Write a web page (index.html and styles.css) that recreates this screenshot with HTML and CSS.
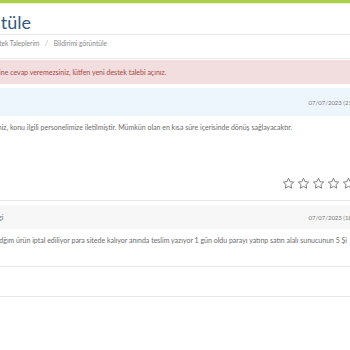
FILE: index.html
```html
<!DOCTYPE html>
<html lang="tr">
<head>
  <meta charset="UTF-8" />
  <meta name="viewport" content="width=device-width, initial-scale=1.0"/>
  <title>Bildirimi Görüntüle</title>
  <link rel="stylesheet" href="styles.css">
</head>
<body>
  <div class="topbar"></div>
  <div class="page">
    <h1 class="baslik">Bildirimi Görüntüle</h1>
    <div class="breadcrumb">
      <a href="#">Anasayfa</a> <span class="ayrac">/</span>
      <a href="#">Destek Taleplerim</a> <span class="ayrac">/</span>
      <span>Bildirimi görüntüle</span>
    </div>

    <div class="uyari">Kapatılmış destek talebine cevap veremezsiniz, lütfen yeni destek talebi açınız.</div>

    <div class="mesaj">
      <div class="mesaj-ust mavi">
        <span class="kim">Destek Ekibi</span>
        <span class="tarih">07/07/2023 (21:14)</span>
      </div>
      <div class="mesaj-govde">
        <p class="ilk">Talebiniz, konu ilgili personelimize iletilmiştir. Mümkün olan en kısa süre içerisinde dönüş sağlayacaktır.</p>
        <div class="puan">
          <svg viewBox="0 0 24 24"><path d="M12 2.5l2.9 6.1 6.6.8-4.9 4.6 1.3 6.6L12 17.3l-5.9 3.3 1.3-6.6-4.9-4.6 6.6-.8z"/></svg>
          <svg viewBox="0 0 24 24"><path d="M12 2.5l2.9 6.1 6.6.8-4.9 4.6 1.3 6.6L12 17.3l-5.9 3.3 1.3-6.6-4.9-4.6 6.6-.8z"/></svg>
          <svg viewBox="0 0 24 24"><path d="M12 2.5l2.9 6.1 6.6.8-4.9 4.6 1.3 6.6L12 17.3l-5.9 3.3 1.3-6.6-4.9-4.6 6.6-.8z"/></svg>
          <svg viewBox="0 0 24 24"><path d="M12 2.5l2.9 6.1 6.6.8-4.9 4.6 1.3 6.6L12 17.3l-5.9 3.3 1.3-6.6-4.9-4.6 6.6-.8z"/></svg>
          <svg viewBox="0 0 24 24"><path d="M12 2.5l2.9 6.1 6.6.8-4.9 4.6 1.3 6.6L12 17.3l-5.9 3.3 1.3-6.6-4.9-4.6 6.6-.8z"/></svg>
        </div>
      </div>
    </div>

    <div class="mesaj">
      <div class="mesaj-ust gri">
        <span class="kim">Sipariş bilgi</span>
        <span class="tarih">07/07/2023 (18:52)</span>
      </div>
      <div class="mesaj-govde kisa">
        <p>Satın aldğım ürün iptal ediliyor para sitede kalıyor anında teslim yazıyor 1 gün oldu parayı yatınp satın alalı sunucunun 5 Şi</p>
      </div>
    </div>

    <div class="bos"></div>
  </div>
</body>
</html>
```

FILE: styles.css
```css
:root {
  --yesil: #a9cf4c;
  --lacivert: #34597d;
  --gri-yazi: #6b6b6b;
  --cizgi: #e8e8e8;
}

body {
  margin: 0;
  overflow: hidden;
  background: #ffffff;
  font-family: 'Lato', 'Open Sans', sans-serif;
}

.topbar {
  height: 3px;
  background: var(--yesil);
  border-bottom: 1px solid #eef3c8;
}

.page {
  margin-left: -118px;
  width: 490px;
}

.baslik {
  margin: 0;
  padding-top: 7px;
  font-size: 18px;
  line-height: 23px;
  font-weight: normal;
  color: var(--lacivert);
  border-bottom: 1px solid var(--cizgi);
}

.breadcrumb {
  padding: 3px 0 10px 65px;
  font-size: 6.6px;
  line-height: 10px;
  color: #888;
  border-bottom: 1px solid var(--cizgi);
}

.breadcrumb a {
  color: #888;
  text-decoration: none;
}

.ayrac {
  margin: 0 4px;
  color: #aaa;
}

.uyari {
  margin-top: 1px;
  padding: 7px 0 7px 46px;
  font-size: 7px;
  line-height: 10px;
  background: #f2dede;
  color: #a94442;
}

.mesaj {
  margin-top: 4px;
}

.mesaj-ust {
  display: flex;
  justify-content: space-between;
  align-items: center;
  padding: 0 10px 0 60px;
  height: 28px;
  font-size: 6px;
  color: #777;
}

.mavi {
  background: #eef6fd;
}

.gri {
  background: #f7f7f7;
  height: 24px;
  padding-left: 87px;
  font-size: 7px;
}

.gri .tarih {
  font-size: 6px;
}

.mesaj-govde {
  padding: 6px 0 0 95px;
  border-bottom: 1px solid var(--cizgi);
}

.mesaj-govde .ilk {
  padding-left: 3px;
}

.mesaj-govde p {
  margin: 0;
  font-size: 7px;
  line-height: 10px;
  color: var(--gri-yazi);
}

.puan {
  display: flex;
  justify-content: flex-end;
  gap: 2px;
  padding: 45px 17px 10px 0;
}

.puan svg {
  width: 13px;
  height: 13px;
  fill: none;
  stroke: #666;
  stroke-width: 1.5;
}

.kisa {
  padding-bottom: 21px;
}

.bos {
  height: 29px;
  border-bottom: 1px solid var(--cizgi);
}
```
